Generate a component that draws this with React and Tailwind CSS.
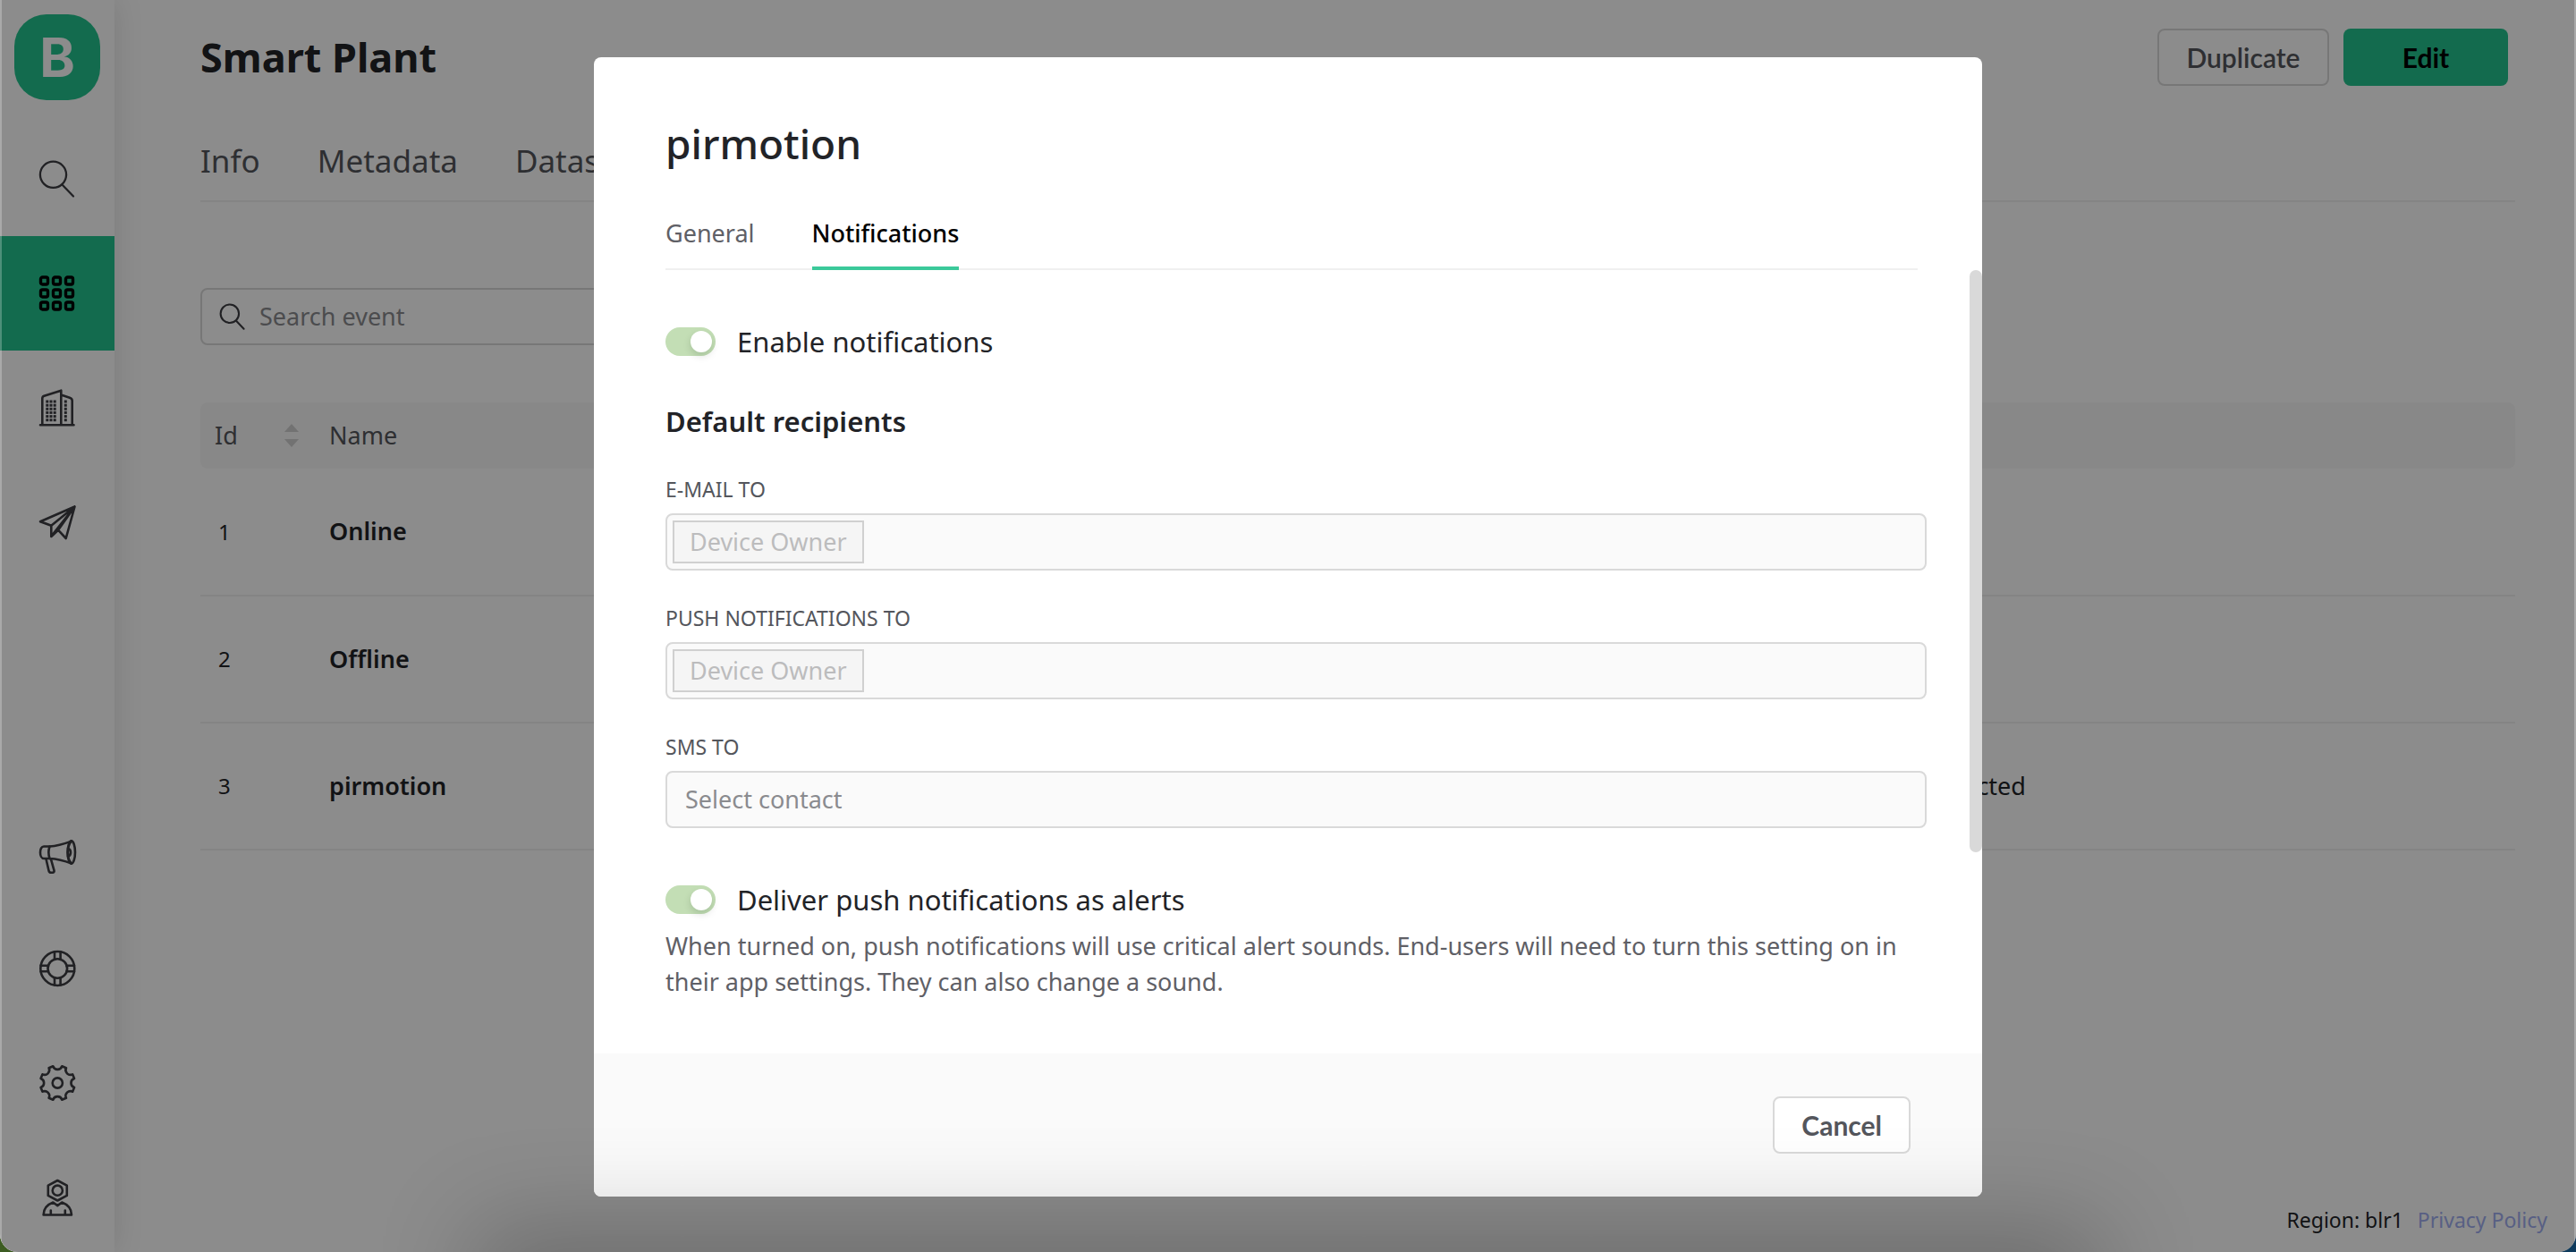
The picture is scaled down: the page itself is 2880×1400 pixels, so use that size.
import React from "react";

function Icon({ children, className = "size-10", strokeWidth = 2.6 }) {
  return (
    <svg
      viewBox="0 0 40 40"
      className={`${className} shrink-0 overflow-visible`}
      fill="none"
      stroke="currentColor"
      strokeWidth={strokeWidth}
      strokeLinecap="round"
      strokeLinejoin="round"
      aria-hidden="true"
    >
      {children}
    </svg>
  );
}

function SearchIcon({ className, strokeWidth = 2.3 }) {
  return (
    <Icon className={className} strokeWidth={strokeWidth}>
      <circle cx="15.5" cy="15.3" r="14.6" />
      <path d="M25.5 26.5 38 39.5" />
    </Icon>
  );
}

function GridIcon() {
  return (
    <Icon strokeWidth={3.4}>
      {[6, 20, 34].map((y) =>
        [5.5, 19.5, 33.5].map((x) => (
          <rect key={`${x}-${y}`} x={x - 4} y={y - 4} width="8" height="8" rx="2" />
        ))
      )}
    </Icon>
  );
}

function BuildingIcon() {
  return (
    <Icon>
      <path d="M3.3 39V9.5c0-1.6.8-2.4 2-2.8l19-6V39M24.3 5.5l9.6 3.2c1.8.6 2.8 1.6 2.8 3.4V39M1 39.3h37.5" />
      <g fill="currentColor" stroke="none">
        {[13, 17.2, 21.3, 25.4, 29.6, 33.7].map((y) =>
          [8.8, 13, 17.2, 29.3].map((x) => (
            <rect key={`${x}-${y}`} x={x - 1.5} y={y - 1.5} width="3" height="3" />
          ))
        )}
      </g>
    </Icon>
  );
}

function PlaneIcon() {
  return (
    <Icon>
      <path d="M39.5 2.5 1 19.3l12.3 4.4V36l7.7-7.3 8.7 9.3zM39.5 2.5 13.3 23.7M39.5 2.5 13.8 35M39.5 2.5 21 28.7M6 21l7.3 2.7" />
    </Icon>
  );
}

function MegaphoneIcon() {
  return (
    <Icon>
      <g transform="translate(0 4)">
        <path d="M11.5 7.5H5c-2.5 0-4 3-4 6.700s1.500 6.800 4 6.800h6.500" />
        <path d="M11.5 7.5c-1.300 3.800-1.300 9.700 0 13.500M11.500 7.500C20 7 28 4.500 36 1.600M11.500 21c8.500.500 16.500 2.500 24.500 5.500" />
        <ellipse cx="35.8" cy="14" rx="4.2" ry="12.6" />
        <path d="M35.5 1.8c-2.500 3-3.700 7.500-3.700 12.200s1.200 9.300 3.700 12.200M32 9.700c2.400.6 3 2.600 3 4.500s-.6 3.900-3 4.500" />
        <path d="m7.500 21.500 3 13c.3 1.600 1.200 2.300 2.700 2.300h1.500c1.500 0 2.200-1 1.800-2.500l-3.500-12.500" />
      </g>
    </Icon>
  );
}

function LifebuoyIcon() {
  return (
    <Icon>
      <circle cx="20.3" cy="20" r="19" />
      <circle cx="20.3" cy="20" r="10.8" />
      <path d="M17 1.500v8.500M23.600 1.500v8.500M17 30v8.500M23.600 30v8.500M1.600 16.700H10M1.600 23.300H10M30.600 16.700H39M30.600 23.300H39" />
    </Icon>
  );
}

// Eight teeth with concave notches between them, computed around the centre.
const gearPath =
  Array.from({ length: 8 }, (_, i) => {
    const at = (deg, r) => {
      const a = ((i * 45 + deg) * Math.PI) / 180;
      return `${(20.3 + r * Math.sin(a)).toFixed(2)} ${(20 - r * Math.cos(a)).toFixed(2)}`;
    };
    return `${i ? "L" : "M"}${at(-15, 19.4)}A5.3 5.3 0 0 0 ${at(15, 19.4)}`;
  }).join("") + "Z";

function GearIcon() {
  return (
    <Icon>
      <path d={gearPath} />
      <circle cx="20.3" cy="20" r="5.6" />
    </Icon>
  );
}

function UserIcon() {
  return (
    <Icon>
      <path d="m20.3 1 10.500 5.700v11.200L20.300 23.500 9.800 17.900V6.700z" />
      <circle cx="20.3" cy="12.2" r="5.6" />
      <path d="M15.300 25.500l5 3.600 5-3.600c6.500 2.500 10.700 7.500 10.700 14H4.600c0-6.500 4.200-11.500 10.700-14zM12.800 34.500v4.800M28.800 34.500v4.800" />
    </Icon>
  );
}

function NavButton({ label, active, children }) {
  return (
    <button
      type="button"
      aria-label={label}
      className={
        active
          ? "flex h-32 w-full items-center justify-center bg-[#24c48e] text-black"
          : "flex h-32 w-full items-center justify-center text-[#3c3d42]"
      }
    >
      {children}
    </button>
  );
}

function BottomNavButton({ label, children }) {
  return (
    <button
      type="button"
      aria-label={label}
      className="flex h-[122px] w-full items-center justify-center text-[#3c3d42]"
    >
      {children}
    </button>
  );
}

function Sidebar() {
  return (
    <nav className="flex w-32 shrink-0 flex-col bg-white shadow-[0_0_32px_rgba(0,0,0,0.12)]">
      <div className="flex h-34 justify-center pt-4">
        <a
          href="#home"
          aria-label="Home"
          className="flex size-24 items-center justify-center rounded-[36px] bg-[#24c48e] font-['Inter'] text-[60px] leading-none font-bold text-white"
        >
          B
        </a>
      </div>
      <NavButton label="Search">
        <SearchIcon />
      </NavButton>
      <NavButton label="Templates" active>
        <GridIcon />
      </NavButton>
      <NavButton label="Organizations">
        <BuildingIcon />
      </NavButton>
      <NavButton label="Shipments">
        <PlaneIcon />
      </NavButton>
      <div className="mt-auto flex flex-col gap-1.5">
        <BottomNavButton label="Announcements">
          <MegaphoneIcon />
        </BottomNavButton>
        <BottomNavButton label="Help">
          <LifebuoyIcon />
        </BottomNavButton>
        <BottomNavButton label="Settings">
          <GearIcon />
        </BottomNavButton>
        <BottomNavButton label="Profile">
          <UserIcon />
        </BottomNavButton>
      </div>
    </nav>
  );
}

const events = [
  { id: 1, name: "Online", description: "" },
  { id: 2, name: "Offline", description: "" },
  { id: 3, name: "pirmotion", description: "Motion detected" },
];

function EventsPage() {
  return (
    <main className="flex min-w-0 flex-1 flex-col pr-[68px] pl-24 text-[27px] text-[#222327]">
      <header className="flex items-center justify-between pt-8 pr-2">
        <h1 className="text-[45px] leading-16 font-bold text-[#222327]">Smart Plant</h1>
        <div className="flex gap-4 font-['Lato']">
          <button
            type="button"
            className="h-16 w-48 rounded-lg border-2 border-[#d9d9d9] text-[30px] font-semibold text-[#54565c]"
          >
            Duplicate
          </button>
          <button type="button" className="h-16 w-46 rounded-lg bg-[#24c48e] text-[30px] font-bold text-black">
            Edit
          </button>
        </div>
      </header>
      <div role="tablist" className="mt-14 flex gap-16 border-b-2 border-[#f0f0f0] pb-4 text-[35px] leading-14 text-[#54565c]">
        <button type="button" role="tab">Info</button>
        <button type="button" role="tab">Metadata</button>
        <button type="button" role="tab">Datastreams</button>
      </div>
      <label className="mt-24 flex h-16 w-[600px] items-center gap-4 rounded-lg border-2 border-[#d9d9d9] px-5 text-[#3c3d42]">
        <SearchIcon className="size-7" strokeWidth={3} />
        <input
          type="text"
          aria-label="Search event"
          placeholder="Search event"
          className="min-w-0 flex-1 bg-transparent outline-none placeholder:text-[#8a8b8f]"
        />
      </label>
      <table className="mt-16 w-full table-fixed text-left">
        <thead>
          <tr className="h-[74px] bg-[#f8f8f8] text-[#54565c]">
            <th className="w-[130px] rounded-l-lg pl-4 font-normal">
              <span className="flex items-center justify-between pr-5">
                Id
                <svg viewBox="0 0 16 26" className="h-[26px] w-4" fill="#cfcfcf" aria-hidden="true">
                  <path d="M8 0l8 9H0zM8 26l8-9H0z" />
                </svg>
              </span>
            </th>
            <th className="w-[1702px] pl-3.5 font-normal">Name</th>
            <th className="rounded-r-lg font-normal" aria-label="Description" />
          </tr>
        </thead>
        <tbody>
          {events.map((e) => (
            <tr key={e.id} className="h-[142px] border-b-2 border-[#f0f0f0]">
              <td className="pl-5 text-[24px]">{e.id}</td>
              <td className="pl-3.5 font-semibold text-[#222327]">{e.name}</td>
              <td className="text-[#222327]">{e.description}</td>
            </tr>
          ))}
        </tbody>
      </table>
      <footer className="-mr-9 mt-auto flex justify-end gap-4 pb-5 text-[23px] leading-8">
        <span>Region: blr1</span>
        <a href="#privacy" className="text-[#a0aef0]">Privacy Policy</a>
      </footer>
    </main>
  );
}

function Toggle({ id, label }) {
  return (
    <div className="flex h-12 items-center gap-6">
      <input
        id={id}
        type="checkbox"
        role="switch"
        defaultChecked
        disabled
        className="flex h-8 w-14 shrink-0 appearance-none items-center justify-end rounded-full bg-[#c3deb5] px-1 before:size-6 before:rounded-full before:bg-white before:shadow-[0_4px_8px_rgba(0,35,11,0.15)]"
      />
      <label htmlFor={id} className="text-[31px] text-[#222327]">
        {label}
      </label>
    </div>
  );
}

function RecipientField({ id, label, chip, placeholder }) {
  return (
    <div className="flex flex-col gap-[11px]">
      <label htmlFor={id} className="text-[23px] leading-8 text-[#54565c]">
        {label}
      </label>
      <div className="flex h-16 items-center rounded-lg border-2 border-[#d9d9d9] bg-[#fafafa] px-1.5">
        {chip && (
          <span className="flex h-12 items-center border-2 border-[#d0d0d0] bg-[#f5f5f5] px-[17px] text-[#bcbcbd]">
            {chip}
          </span>
        )}
        <input
          id={id}
          type="text"
          disabled
          placeholder={placeholder}
          className="min-w-0 flex-1 bg-transparent px-3.5 placeholder:text-[#8a8b8f]"
        />
      </div>
    </div>
  );
}

function EventDialog() {
  return (
    <section
      role="dialog"
      aria-modal="true"
      aria-labelledby="dialog-title"
      className="relative flex w-[1552px] max-w-full flex-col overflow-hidden rounded-lg bg-white text-[27px] text-[#222327]"
    >
      <div className="pt-16 pr-18 pl-20">
        <h2 id="dialog-title" className="text-[46px] leading-16 font-medium">
          pirmotion
        </h2>
        <div role="tablist" className="mt-8 flex gap-16 shadow-[inset_0_-2px_0_#f0f0f0]">
          <button
            type="button"
            role="tab"
            aria-selected="false"
            className="h-[78px] border-b-4 border-transparent text-[#5f6066]"
          >
            General
          </button>
          <button
            type="button"
            role="tab"
            aria-selected="true"
            className="h-[78px] border-b-4 border-[#3bc99a] font-medium text-black"
          >
            Notifications
          </button>
        </div>
      </div>
      <div className="pt-14 pr-[62px] pb-15 pl-20">
        <Toggle id="enable" label="Enable notifications" />
        <h3 className="mt-[41px] text-[31px] leading-12 font-semibold">Default recipients</h3>
        <div className="mt-9 flex flex-col gap-[37px]">
          <RecipientField id="email-to" label="E-MAIL TO" chip="Device Owner" />
          <RecipientField id="push-to" label="PUSH NOTIFICATIONS TO" chip="Device Owner" />
          <RecipientField id="sms-to" label="SMS TO" placeholder="Select contact" />
        </div>
        <div className="mt-14">
          <Toggle id="alerts" label="Deliver push notifications as alerts" />
          <p className="mt-2 leading-10 text-[#5f6066]">
            When turned on, push notifications will use critical alert sounds. End-users will need to turn this setting
            on in their app settings. They can also change a sound.
          </p>
        </div>
      </div>
      <div className="flex justify-end bg-[#fafafa] px-20 py-12">
        <button
          type="button"
          className="h-16 rounded-lg border-2 border-[#d9d9d9] bg-white px-[30px] font-['Lato'] text-[30px] font-bold text-[#54565c]"
        >
          Cancel
        </button>
      </div>
      <span className="absolute top-[238px] right-0 h-[651px] w-3.5 rounded-full bg-[#d9d9d9]" />
    </section>
  );
}

export default function App() {
  return (
    <div className="min-h-screen bg-linear-to-r from-[#3d5c22] to-[#0e3a5c] font-['Noto_Sans',sans-serif]">
      <div className="relative flex min-h-screen overflow-hidden rounded-b-[20px] bg-white">
        <Sidebar />
        <EventsPage />
        <div className="absolute inset-0 flex items-start justify-center border-x-2 border-white/25 bg-black/45 pt-16">
          <EventDialog />
        </div>
        <div className="pointer-events-none absolute inset-x-[560px] top-full h-20 shadow-[0_0_110px_30px_rgba(0,0,0,0.22)]" />
      </div>
    </div>
  );
}
